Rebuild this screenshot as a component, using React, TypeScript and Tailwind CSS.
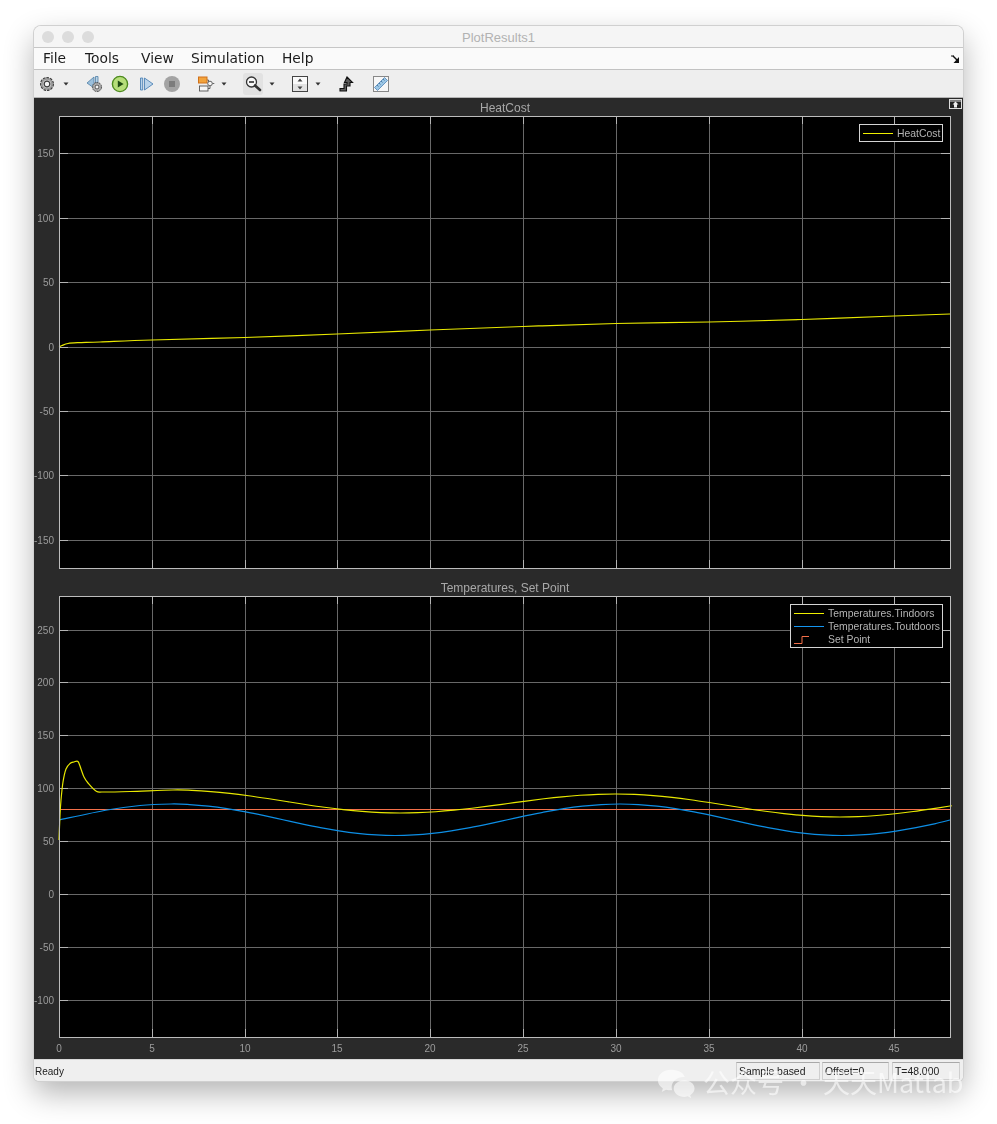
const xTicks = [0, 5, 10, 15, 20, 25, 30, 35, 40, 45];
const toX = (t: number) => Math.round(59 + t * 18.565);

// catmull-rom through page-pixel points, good enough for the scope traces
function smooth(pts: number[][]) {
  let d = `M${pts[0][0]} ${pts[0][1]}`;
  for (let i = 0; i < pts.length - 1; i++) {
    const p0 = pts[Math.max(i - 1, 0)];
    const p1 = pts[i];
    const p2 = pts[i + 1];
    const p3 = pts[Math.min(i + 2, pts.length - 1)];
    const c1 = [p1[0] + (p2[0] - p0[0]) / 6, p1[1] + (p2[1] - p0[1]) / 6];
    const c2 = [p2[0] - (p3[0] - p1[0]) / 6, p2[1] - (p3[1] - p1[1]) / 6];
    d += ` C${c1[0]} ${c1[1]} ${c2[0]} ${c2[1]} ${p2[0]} ${p2[1]}`;
  }
  return d;
}

// cosine swing between turning points, cut off at the right edge of the axes
function wave(turns: number[][]) {
  const out: number[][] = [];
  for (let i = 0; i < turns.length - 1; i++) {
    const [x0, y0] = turns[i];
    const [x1, y1] = turns[i + 1];
    for (let k = 0; k < 12; k++) {
      const t = k / 12;
      const x = x0 + (x1 - x0) * t;
      if (x <= 950) out.push([x, y0 + ((y1 - y0) * (1 - Math.cos(Math.PI * t))) / 2]);
    }
  }
  return out;
}

const heatCost = [[59, 347], [62, 345.5], [68, 343.5], [78, 342.7], [100, 342], [152, 340], [245, 337.5], [337, 334], [430, 330], [523, 326.5], [616, 323.5], [709, 322], [802, 319.5], [894, 316], [950, 314]];
const tIndoors = [[59, 840], [60, 815], [61, 800], [63, 782], [66, 769], [70, 763.5], [74, 762], [78, 761.5], [81, 769], [84, 777], [88, 783], [96, 791], [103, 792], [130, 791.5], ...wave([[173, 790], [400, 813], [616, 794], [840, 817], [1060, 795]]), [950, 806]];
const tOutdoors = [[59, 820], [107, 810], [140, 805.5], ...wave([[171, 804], [395, 835.5], [620, 804], [842, 835.5], [1064, 804]]), [950, 820]];

function Plot({ title, top, height, yTicks, showX, traces, legend, titleH }: {
  title: string;
  top: number;
  height: number;
  yTicks: [string, number][];
  showX?: boolean;
  traces: React.ReactNode;
  legend: React.ReactNode;
  titleH: string;
}) {
  const bottom = top + height;
  const svgH = showX ? height + 22 : height + 1;
  return (
    <div className="will-change-transform">
      <div className={`${titleH} flex items-end justify-center pl-[13px] text-[12px] leading-[15px] text-[#a8a8a8]`}>{title}</div>
      <div className="relative">
        <svg width={929} height={svgH} viewBox={`34 ${top} 929 ${svgH}`} className="block">
          <rect x={59} y={top} width={891} height={height} fill="#000" />
          {xTicks.slice(1).map((t) => (
            <g key={t}>
              <line x1={toX(t) + 0.5} x2={toX(t) + 0.5} y1={top} y2={bottom} stroke="#686868" />
              <line x1={toX(t) + 0.5} x2={toX(t) + 0.5} y1={top} y2={top + 8} stroke="#b4b4b4" />
              <line x1={toX(t) + 0.5} x2={toX(t) + 0.5} y1={bottom - 8} y2={bottom} stroke="#b4b4b4" />
            </g>
          ))}
          {yTicks.map(([label, y]) => (
            <g key={label}>
              <line x1={59} x2={950} y1={y + 0.5} y2={y + 0.5} stroke="#686868" />
              <line x1={59} x2={68} y1={y + 0.5} y2={y + 0.5} stroke="#b4b4b4" />
              <line x1={941} x2={950} y1={y + 0.5} y2={y + 0.5} stroke="#b4b4b4" />
              <text x={54} y={y + 4} textAnchor="end" className="fill-[#9c9c9c] text-[10px]">{label}</text>
            </g>
          ))}
          {traces}
          <rect x={59.5} y={top + 0.5} width={891} height={height} fill="none" stroke="#bcbcbc" />
          {showX && xTicks.map((t) => (
            <text key={t} x={toX(t)} y={bottom + 15} textAnchor="middle" className="fill-[#9c9c9c] text-[10px]">{t}</text>
          ))}
        </svg>
        {legend}
      </div>
    </div>
  );
}

function LegendRow({ label, swatch }: { label: string; swatch: React.ReactNode }) {
  return (
    <div className="flex h-[13px] items-center">
      <svg width={30} height={13} className="mr-1 shrink-0">{swatch}</svg>
      <span className="text-[10.4px] leading-[13px] whitespace-nowrap text-[#b4b4b4]">{label}</span>
    </div>
  );
}

const Caret = ({ className }: { className: string }) => (
  <svg width={8} height={8} viewBox="0 0 8 8" className={className}><path d="M1.5 2.5h5L4 5.5z" fill="#333" /></svg>
);

function Gear({ x = 10, y = 10, r = 7 }: { x?: number; y?: number; r?: number }) {
  return (
    <g transform={`translate(${x} ${y}) scale(${r / 7})`}>
      <circle r={6.4} fill="#b4b4b4" stroke="#3f3f3f" strokeWidth={1.2} strokeDasharray="2.6 1" />
      <circle r={4.9} fill="#c9c9c9" stroke="#777" strokeWidth={0.7} />
      <circle r={2.8} fill="#f4f4f4" stroke="#3c3c3c" strokeWidth={1.2} />
    </g>
  );
}

function Toolbar() {
  return (
    <div className="flex h-[28px] items-center border-b border-[#b4b4b4] bg-[#eeeeee]">
      <svg width={20} height={20} className="ml-[3px]" viewBox="0 0 20 20"><Gear /></svg>
      <Caret className="ml-[5px]" />
      <svg width={20} height={20} className="ml-[15px]" viewBox="0 0 20 20">
        <path d="M2 9l7-6v11z" fill="#9cc0dc" stroke="#4f7fa6" strokeWidth={0.8} />
        <path d="M10.5 2.5h2.500v6h-2.500z" fill="#b8d2e6" stroke="#4f7fa6" strokeWidth={0.8} />
        <Gear x={12} y={13} r={5} />
      </svg>
      <svg width={20} height={20} className="ml-[5px]" viewBox="0 0 20 20">
        <circle cx={10} cy={10} r={7.6} fill="#b6de7a" stroke="#4d8a1e" strokeWidth={1.4} />
        <path d="M7.800 6.400l5.800 3.600-5.800 3.600z" fill="#1f4a12" />
      </svg>
      <svg width={20} height={20} className="ml-[6px]" viewBox="0 0 20 20">
        <path d="M4.500 4v12h2.200V4z" fill="#b9d3ea" stroke="#4f83b5" strokeWidth={0.9} />
        <path d="M8.500 4l8.500 6-8.500 6z" fill="#b9d3ea" stroke="#4f83b5" strokeWidth={0.9} />
      </svg>
      <svg width={20} height={20} className="ml-[6px]" viewBox="0 0 20 20">
        <circle cx={10} cy={10} r={8} fill="#a3a3a3" />
        <rect x={7} y={7} width={6} height={6} fill="#7c7c7c" />
      </svg>
      <svg width={20} height={20} className="ml-[14px]" viewBox="0 0 20 20">
        <path d="M11 6h1.500v3M12 14.500h2v-3M16.300 9.500h2" fill="none" stroke="#555" strokeWidth={0.9} />
        <rect x={2.500} y={3} width={8.500} height={6} fill="#f2a33c" stroke="#d0701a" strokeWidth={1} />
        <rect x={3.500} y={12} width={8.500} height={5} fill="#f6f6f6" stroke="#555" strokeWidth={0.9} />
        <circle cx={14} cy={9.500} r={2.300} fill="#f6f6f6" stroke="#555" strokeWidth={0.9} />
      </svg>
      <Caret className="ml-[4px]" />
      <div className="ml-[15px] flex h-[22px] w-[20px] items-center justify-center rounded-[3px] bg-[#e2e2e2]">
        <svg width={18} height={18} viewBox="0 0 18 18">
          <circle cx={7.500} cy={7} r={5} fill="#f7f7f7" stroke="#333" strokeWidth={1.3} />
          <path d="M5 7h5" stroke="#222" strokeWidth={1.4} />
          <path d="M11 10.500l5 4.500" stroke="#333" strokeWidth={2.600} strokeLinecap="round" />
        </svg>
      </div>
      <Caret className="ml-[5px]" />
      <svg width={20} height={20} className="ml-[14px]" viewBox="0 0 20 20">
        <rect x={2.500} y={2.500} width={15} height={8} fill="#fafafa" />
        <rect x={2.500} y={10} width={15} height={7.500} fill="#e2e2e2" />
        <rect x={2.500} y={2.500} width={15} height={15} fill="none" stroke="#444" />
        <path d="M10 4.500l2.500 3h-5zM10 15.500l2.500-3h-5z" fill="#444" />
      </svg>
      <Caret className="ml-[4px]" />
      <svg width={20} height={20} className="ml-[14px]" viewBox="0 0 20 20">
        <path d="M11 3l5.500 5.500H14V12h-3.500v5H4v-2.500h4V10h3V8.500H8.500z" fill="#5c5c5c" stroke="#111" strokeWidth={1.1} />
      </svg>
      <svg width={20} height={20} className="ml-[15px]" viewBox="0 0 20 20">
        <rect x={2.500} y={2.500} width={15} height={15} fill="#f7f7f7" stroke="#888" />
        <path d="M3.500 13.500l10-10 3 3-10 10z" fill="#9cc7e6" stroke="#4f83b5" strokeWidth={0.8} />
        <path d="M6 11l1.500 1.500M8 9l1.500 1.500M10 7l1.500 1.500M12 5l1.500 1.500" stroke="#2f5f8a" strokeWidth={0.7} />
      </svg>
    </div>
  );
}

const StatusField = ({ className, children }: { className: string; children: string }) => (
  <div className={`${className} h-[18px] border border-[#cfcfcf] border-t-[#a9a9a9] pl-[2px] text-[10.4px] leading-[18px] text-[#222] will-change-transform`}>{children}</div>
);

export default function App() {
  return (
    <div className="relative h-[1124px] w-[997px] overflow-hidden bg-white pt-[26px] pl-[34px] [font-family:'Liberation_Sans',sans-serif]">
      <div className="flex h-[1055px] w-[929px] flex-col overflow-hidden rounded-t-[7px] rounded-b-[5px] shadow-[0_0_0_1px_#d0d0d0,0_12px_30px_rgba(0,0,0,0.3)]">
        <div className="relative flex h-[22px] items-center justify-center border-b border-[#c6c6c6] bg-[#f5f5f5] pt-[2px]">
          <div className="absolute top-[5px] left-[8px] flex gap-2">
            <span className="h-3 w-3 rounded-full bg-[#dcdcdc]" />
            <span className="h-3 w-3 rounded-full bg-[#dcdcdc]" />
            <span className="h-3 w-3 rounded-full bg-[#dcdcdc]" />
          </div>
          <span className="text-[13px] text-[#b2b2b2]">PlotResults1</span>
        </div>
        <div className="relative flex h-[22px] items-center border-b border-[#c2c2c2] bg-[#fafafa] pl-[9px] text-[13.8px] text-[#1c1c1c] [font-family:'DejaVu_Sans',sans-serif]">
          <div className="flex will-change-transform">
            <span className="w-[42px]">File</span>
            <span className="w-[56px]">Tools</span>
            <span className="w-[50px]">View</span>
            <span className="w-[91px]">Simulation</span>
            <span>Help</span>
          </div>
          <svg width={9} height={8} viewBox="0 0 9 8" className="absolute top-[7px] right-[3px]">
            <path d="M0 1h3" stroke="#111" />
            <path d="M2 1l4 4" stroke="#111" strokeWidth={1.4} />
            <path d="M8 2v6H2.500z" fill="#111" />
          </svg>
        </div>
        <Toolbar />
        <div className="relative flex-1 bg-[#2a2a2a]">
          <svg width={13} height={10} viewBox="0 0 13 10" className="absolute top-[1px] right-[1px] z-10">
            <rect x={0.5} y={0.5} width={12} height={9} fill="#222" stroke="#ddd" />
            <path d="M1 2h11" stroke="#ddd" />
            <path d="M6.500 2.500l3 3H8v3H5v-3H3.500z" fill="#eee" />
          </svg>
          <Plot
            title="HeatCost"
            titleH="h-[18px]"
            top={116}
            height={452}
            yTicks={[["150", 153], ["100", 218], ["50", 282], ["0", 347], ["-50", 411], ["-100", 475], ["-150", 540]]}
            traces={<path d={smooth(heatCost)} fill="none" stroke="#e8e800" strokeWidth={1.2} />}
            legend={
              <div className="absolute top-[8px] right-[20px] flex h-[18px] w-[84px] items-center border border-[#d4d4d4] bg-black pl-[3px]">
                <LegendRow label="HeatCost" swatch={<line x1={0} x2={30} y1={6.5} y2={6.5} stroke="#f0f000" />} />
              </div>
            }
          />
          <Plot
            title="Temperatures, Set Point"
            titleH="h-[27px]"
            top={596}
            height={441}
            showX
            yTicks={[["250", 630], ["200", 682], ["150", 735], ["100", 788], ["50", 841], ["0", 894], ["-50", 947], ["-100", 1000]]}
            traces={
              <>
                <line x1={59} x2={950} y1={809.5} y2={809.5} stroke="#f4704a" />
                <path d={smooth(tOutdoors)} fill="none" stroke="#0d8fe6" strokeWidth={1.2} />
                <path d={smooth(tIndoors)} fill="none" stroke="#e8e800" strokeWidth={1.2} />
              </>
            }
            legend={
              <div className="absolute top-[8px] right-[20px] flex h-[44px] w-[153px] flex-col justify-center border border-[#d4d4d4] bg-black pl-[3px]">
                <LegendRow label="Temperatures.Tindoors" swatch={<line x1={0} x2={30} y1={6.5} y2={6.5} stroke="#f0f000" />} />
                <LegendRow label="Temperatures.Toutdoors" swatch={<line x1={0} x2={30} y1={6.5} y2={6.5} stroke="#1495f0" />} />
                <LegendRow label="Set Point" swatch={<path d="M0 10.500h8V3.500h7" fill="none" stroke="#f4704a" />} />
              </div>
            }
          />
        </div>
        <div className="flex h-[22px] items-center border-t border-[#d8d8d8] bg-[#efefef] pr-[3px] pl-[1px]">
          <span className="flex-1 pt-[2px] text-[10px] text-[#222] will-change-transform">Ready</span>
          <StatusField className="w-[84px]">Sample based</StatusField>
          <StatusField className="ml-[2px] w-[67px]">Offset=0</StatusField>
          <StatusField className="ml-[3px] w-[68px]">T=48.000</StatusField>
        </div>
      </div>
      {/* watermark sits on top of the status bar and page */}
      <div className="absolute top-[1065px] left-[657px] flex items-center whitespace-nowrap text-white/60">
        <svg width={38} height={31} viewBox="0 0 42 34" className="mr-[8px]" fill="currentColor">
          <path d="M15 3C7.500 3 1 8 1 14.500c0 3.800 2.200 6.900 5.500 9l-1.300 4 4.800-2.500c1.600.4 3.300.7 5 .7 .6 0 1.200 0 1.800-.1-.4-1.100-.6-2.300-.6-3.500 0-6.300 5.900-11.300 13.300-11.300h1.200C29 5.800 22.600 3 15 3z" />
          <path d="M30 14.500c-6.200 0-11.500 4-11.500 9.200s5.300 9.200 11.500 9.200c1.300 0 2.700-.2 3.900-.6l3.800 2-1-3.300c2.900-1.700 4.800-4.300 4.800-7.300 0-5.200-4.900-9.200-11.500-9.200z" />
        </svg>
        <span className="text-[27px] leading-[34px] [font-family:'Noto_Sans_CJK_SC',sans-serif]">公众号 · 天天Matlab</span>
      </div>
    </div>
  );
}
